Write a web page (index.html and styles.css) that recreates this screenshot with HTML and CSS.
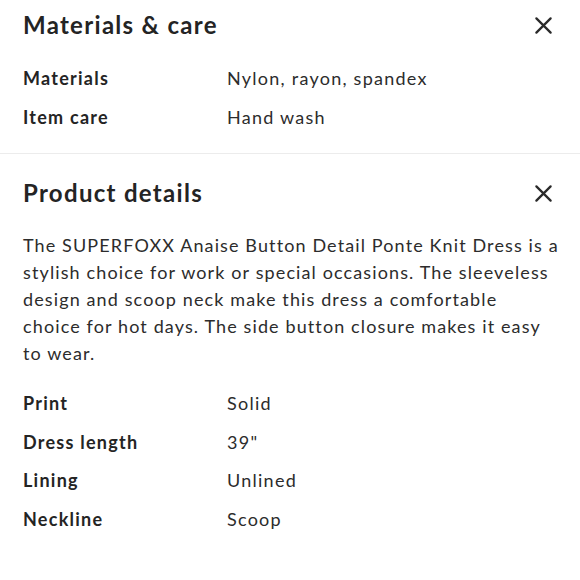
FILE: index.html
```html
<!DOCTYPE html>
<html lang="en">
<head>
<meta charset="utf-8">
<title>Details</title>
<link rel="stylesheet" href="styles.css">
</head>
<body>
<section class="panel first">
  <div class="panel-head">
    <h2 class="panel-title">Materials &amp; care</h2>
    <button class="close" aria-label="Close">
      <svg viewBox="0 0 20 20" width="20" height="20"><path d="M2.5 2.5 L17.5 17.5 M17.5 2.5 L2.5 17.5" stroke="#2a2a2a" stroke-width="2.4" stroke-linecap="round" fill="none"/></svg>
    </button>
  </div>
  <dl class="specs">
    <dt>Materials</dt><dd>Nylon, rayon, spandex</dd>
    <dt>Item care</dt><dd>Hand wash</dd>
  </dl>
</section>
<section class="panel second">
  <div class="panel-head">
    <h2 class="panel-title">Product details</h2>
    <button class="close" aria-label="Close">
      <svg viewBox="0 0 20 20" width="20" height="20"><path d="M2.5 2.5 L17.5 17.5 M17.5 2.5 L2.5 17.5" stroke="#2a2a2a" stroke-width="2.4" stroke-linecap="round" fill="none"/></svg>
    </button>
  </div>
  <p class="desc">The SUPERFOXX Anaise Button Detail Ponte Knit Dress is a<br>stylish choice for work or special occasions. The sleeveless<br>design and scoop neck make this dress a comfortable<br>choice for hot days. The side button closure makes it easy<br>to wear.</p>
  <dl class="specs">
    <dt>Print</dt><dd>Solid</dd>
    <dt>Dress length</dt><dd>39"</dd>
    <dt>Lining</dt><dd>Unlined</dd>
    <dt>Neckline</dt><dd>Scoop</dd>
  </dl>
</section>
</body>
</html>
```
FILE: styles.css
```css
html, body {
  margin: 0;
  padding: 0;
  background: #ffffff;
}
body {
  font-family: Lato, "Open Sans", sans-serif;
  color: #262626;
  width: 580px;
}
.panel {
  padding: 0 22px 0 23px;
}
.panel.first {
  padding-top: 10px;
  padding-bottom: 17px;
  border-bottom: 1px solid #ececec;
}
.panel.second {
  padding-top: 24px;
}
.panel-head {
  display: flex;
  align-items: center;
  justify-content: space-between;
  height: 30px;
}
.panel-title {
  margin: 0;
  font-size: 24px;
  font-weight: 700;
  line-height: 30px;
  letter-spacing: 1.3px;
  color: #242424;
}
.close {
  border: 0;
  background: none;
  padding: 0;
  margin-right: 0;
  width: 30px;
  height: 30px;
  display: flex;
  align-items: center;
  justify-content: center;
}
.close svg {
  display: block;
  width: 19px;
  height: 19px;
}
.specs {
  margin: 0;
  display: grid;
  grid-template-columns: 204px 1fr;
  grid-auto-rows: 38.5px;
  align-items: center;
  font-size: 18px;
  letter-spacing: 1.25px;
}
.first .specs {
  margin-top: 19px;
}
.second .specs {
  margin-top: 17px;
}
.specs dt {
  font-weight: 700;
  color: #242424;
}
.specs dd {
  margin: 0;
  color: #2c2c2c;
}
.desc {
  margin: 24px -20px 0 0;
  font-size: 18px;
  line-height: 27px;
  letter-spacing: 1.12px;
  white-space: nowrap;
  color: #2c2c2c;
}
```
